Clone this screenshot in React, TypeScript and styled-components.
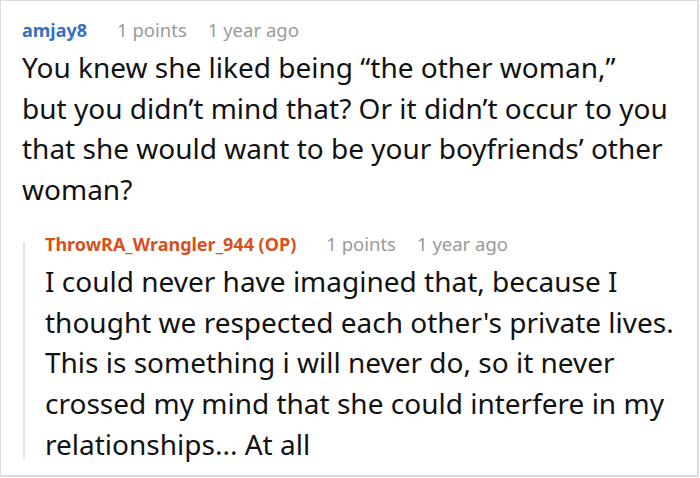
import React, { FC } from 'react'
import styled, { createGlobalStyle } from 'styled-components'

type Comment = {
  author: string
  points: number
  age: string
  body: string[]
  op?: boolean
}

const parent: Comment = {
  author: 'amjay8',
  points: 1,
  age: '1 year ago',
  body: [
    'You knew she liked being \u201cthe other woman,\u201d',
    'but you didn\u2019t mind that? Or it didn\u2019t occur to you that she would want to be your boyfriends\u2019 other woman?',
  ],
}

const reply: Comment = {
  author: 'ThrowRA_Wrangler_944 (OP)',
  points: 1,
  age: '1 year ago',
  op: true,
  body: [
    "I could never have imagined that, because I thought we respected each other's private lives. This is something i will never do, so it never crossed my mind that she could interfere in my relationships... At all",
  ],
}

const CommentBlock: FC<{ comment: Comment }> = ({ comment }) => (
  <div>
    <Meta>
      <Author $op={comment.op}>{comment.author}</Author>
      <MetaText>{comment.points} points</MetaText>
      <MetaText>{comment.age}</MetaText>
    </Meta>
    <Body>
      {comment.body.map((line, i) => (
        <React.Fragment key={i}>
          {i > 0 && <br />}
          {line}
        </React.Fragment>
      ))}
    </Body>
  </div>
)

export default function App() {
  return (
    <>
      <GlobalStyle />
      <Card>
        <CommentBlock comment={parent} />
        <Replies>
          <ThreadLine />
          <CommentBlock comment={reply} />
        </Replies>
      </Card>
    </>
  )
}

const GlobalStyle = createGlobalStyle`
  html, body {
    margin: 0;
    padding: 0;
    background: #fff;
  }
  body {
    font-family: 'Noto Sans', 'Open Sans', sans-serif;
  }
`
const Card = styled.div`
  box-sizing: border-box;
  width: 699px;
  height: 477px;
  padding: 17px 10px 0 21px;
  border: 1px solid #dcdcdc;
  border-width: 1px 2px 2px 1px;
  background: #fff;
`
const Meta = styled.div`
  display: flex;
  align-items: baseline;
  gap: 21px;
  height: 24px;
  line-height: 24px;
  font-size: 18.5px;
`
const Author = styled.span<{ $op?: boolean }>`
  font-size: 18px;
  font-weight: 700;
  color: ${p => (p.$op ? '#d8501c' : '#3a6ebf')};
  margin-right: 9px;
`
const MetaText = styled.span`
  color: #9a9a9a;
`
const Body = styled.p`
  margin: 5px 0 0;
  font-size: 28px;
  line-height: 40.7px;
  color: #121212;
`
const Replies = styled.div`
  display: flex;
  gap: 20px;
  margin-top: 22px;
`
const ThreadLine = styled.div`
  flex: none;
  width: 2px;
  margin: 10px 0 5px 1px;
  background: #e2e2e2;
`
